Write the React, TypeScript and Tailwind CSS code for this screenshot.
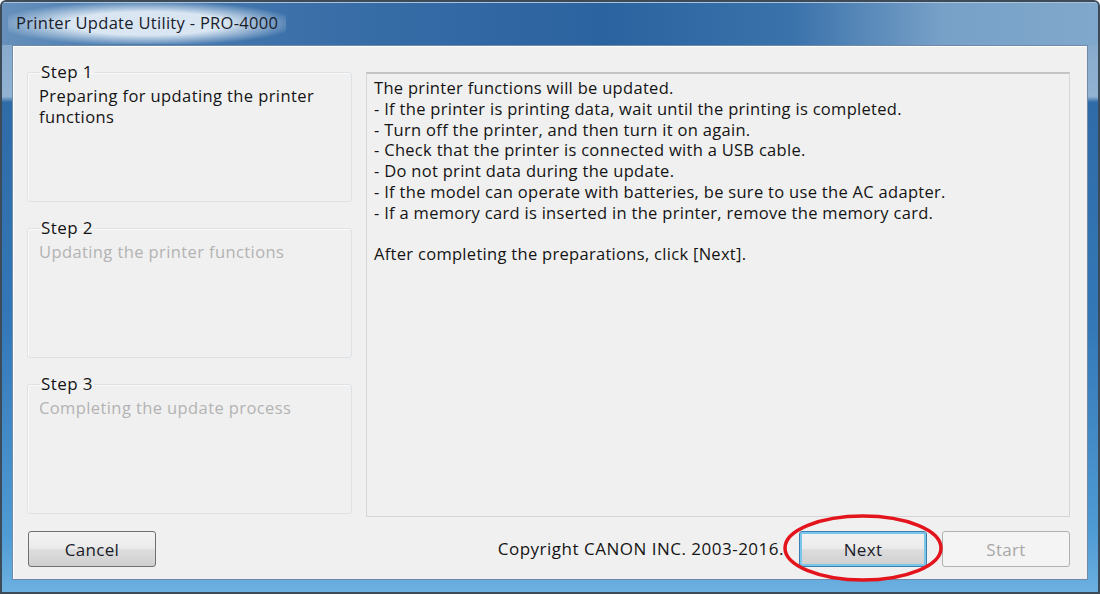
const font = { fontFamily: '"Open Sans", "Noto Sans", Arial, sans-serif' };

const steps = [
  { title: 'Step 1', text: 'Preparing for updating the printer functions', active: true },
  { title: 'Step 2', text: 'Updating the printer functions', active: false },
  { title: 'Step 3', text: 'Completing the update process', active: false },
];

const notes = [
  'The printer functions will be updated.',
  '- If the printer is printing data, wait until the printing is completed.',
  '- Turn off the printer, and then turn it on again.',
  '- Check that the printer is connected with a USB cable.',
  '- Do not print data during the update.',
  '- If the model can operate with batteries, be sure to use the AC adapter.',
  '- If a memory card is inserted in the printer, remove the memory card.',
];

function StepBox({ title, text, active }: { title: string; text: string; active: boolean }) {
  return (
    <fieldset className="h-[141px] border border-[#dde2e6] rounded-[3px] pl-[11px] pr-[4px] shadow-[inset_1px_1px_0_#fafafa]">
      <legend className="ml-[1px] px-[1px] text-[17px] tracking-[0.4px] leading-[22px] text-[#141414]">{title}</legend>
      <p
        className={`mt-[2px] text-[16.5px] tracking-[0.4px] leading-[21px] ${active ? 'text-[#141414]' : 'text-[#b3b3b3]'}`}
      >
        {text}
      </p>
    </fieldset>
  );
}

function Button({ label, kind }: { label: string; kind: 'normal' | 'default' | 'disabled' }) {
  const styles = {
    normal: 'border-[#707070] bg-[linear-gradient(#f2f2f2_0%,#ebebeb_48%,#dddddd_52%,#cfcfcf_100%)] text-[#1a1a2a]',
    default:
      'border-[#3c7fb1] bg-[linear-gradient(#f2f2f2_0%,#ebebeb_48%,#dddddd_52%,#cfcfcf_100%)] text-[#1a1a2a] shadow-[inset_0_0_0_2px_#79c6ea]',
    disabled: 'border-[#adb2b5] bg-[#f4f4f4] text-[#a8a8a8]',
  }[kind];
  return (
    <button
      className={`w-[128px] h-[36px] rounded-[3px] border text-[17px] tracking-[0.3px] leading-none ${styles}`}
      style={font}
    >
      {label}
    </button>
  );
}

export default function App() {
  return (
    <div
      className="relative w-[1100px] h-[594px] overflow-hidden flex flex-col border-[2px] border-[#3d4a58] rounded-t-[6px] bg-[linear-gradient(180deg,#7fa3c8_0%,#92b3d2_16%,#2f6ba7_17%,#3478b8_55%,#4f9bd4_90%,#6cb0e0_100%)]"
      style={font}
    >
      {/* title bar */}
      <div className="h-[43px] shrink-0 flex items-center pl-[6px] bg-[linear-gradient(90deg,#6690bb_0%,#4f80b3_8%,#3a6fa8_28%,#2b63a0_55%,#3a72ab_72%,#78a1c8_86%,#80a8cc_100%)] shadow-[inset_0_1px_0_#a9c3dc]">
        <span className="px-[8px] py-[8px] text-[16.5px] tracking-[0.3px] text-[#18202a] rounded-[16px] bg-[radial-gradient(ellipse_at_center,rgba(225,236,246,0.95)_40%,rgba(225,236,246,0)_78%)]">
          Printer Update Utility - PRO-4000
        </span>
      </div>

      {/* client area */}
      <div className="flex-1 mx-[10px] mb-[12px] border border-[#6f8aa6] bg-[#f0f0f0] shadow-[inset_1px_1px_0_#ffffff] flex flex-col pl-[14px] pr-[17px] pt-[15px] pb-[12px]">
        <div className="flex gap-[14px]">
          <div className="w-[325px] flex flex-col gap-[15px]">
            {steps.map((s) => (
              <StepBox key={s.title} {...s} />
            ))}
          </div>
          <div className="mt-[11px] h-[445px] flex-1 border border-[#d6d6d6] border-t-[#c4c4c4] border-t-[2px] bg-[#f0f0f0] px-[7px] pt-[4px] text-[16.5px] tracking-[0.3px] leading-[20.8px] text-[#141414]">
            {notes.map((n) => (
              <div key={n}>{n}</div>
            ))}
            <div className="mt-[20.8px]">After completing the preparations, click [Next].</div>
          </div>
        </div>

        <div className="mt-[14px] flex items-center">
          <div className="ml-[1px]">
            <Button label="Cancel" kind="normal" />
          </div>
          <div className="ml-auto mr-[15px] text-[17px] tracking-[0.5px] text-[#141414]">Copyright CANON INC. 2003-2016.</div>
          <div className="relative">
            <Button label="Next" kind="default" />
            <svg
              className="absolute left-[-17px] top-[-18px] pointer-events-none"
              width="162"
              height="70"
              viewBox="0 0 162 70"
            >
              <ellipse cx="81" cy="35" rx="78" ry="32" fill="none" stroke="#e3141c" strokeWidth="3.5" />
            </svg>
          </div>
          <div className="ml-[15px]">
            <Button label="Start" kind="disabled" />
          </div>
        </div>
      </div>
    </div>
  );
}
